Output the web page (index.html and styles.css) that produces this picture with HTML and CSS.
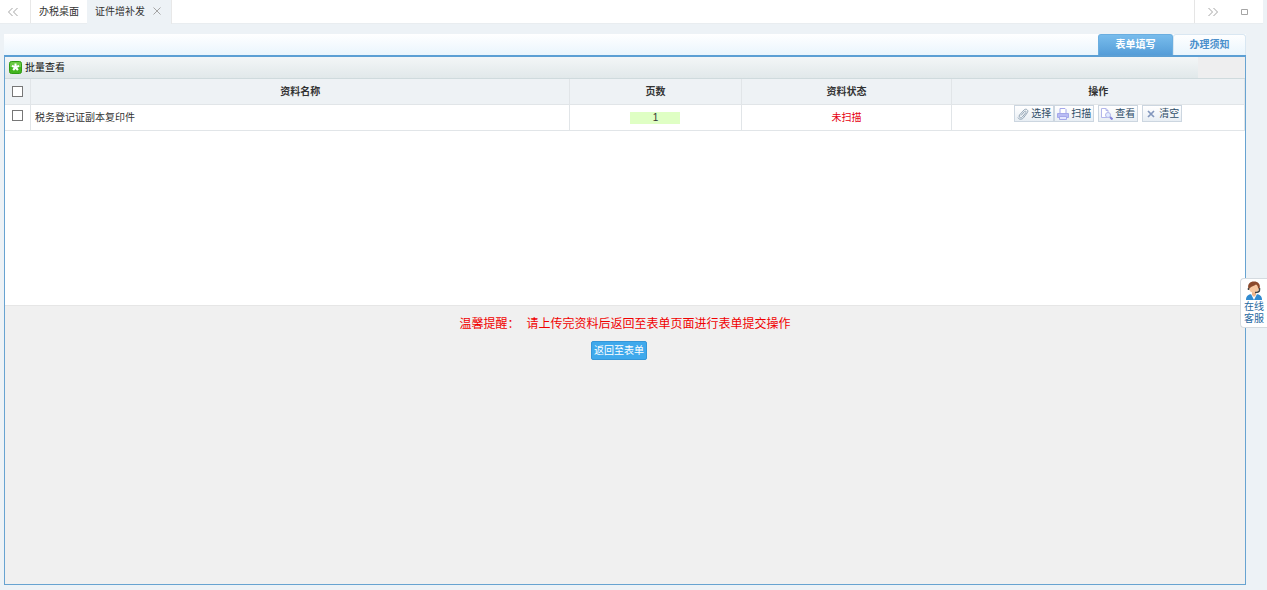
FILE: index.html
```html
<!DOCTYPE html>
<html lang="zh-CN">
<head>
<meta charset="utf-8">
<title>证件增补发</title>
<link rel="stylesheet" href="styles.css">
</head>
<body>
<div class="page">
  <header class="topbar">
    <button class="nav-btn nav-prev" type="button" aria-label="向左滚动"><svg width="12" height="10" viewBox="0 0 12 10"><path d="M5.500 1 1.500 5l4 4M10.500 1l-4 4 4 4"/></svg></button>
    <nav class="page-tabs">
      <a class="page-tab" href="#">办税桌面</a>
      <div class="page-tab current"><a href="#">证件增补发</a><button class="close" type="button" aria-label="关闭"><svg width="8" height="8" viewBox="0 0 8 8"><path d="M.5.5l7 7M7.500.5l-7 7"/></svg></button></div>
    </nav>
    <div class="window-tools">
      <button class="nav-btn" type="button" aria-label="向右滚动"><svg width="12" height="10" viewBox="0 0 12 10"><path d="M1.500 1l4 4-4 4M6.500 1l4 4-4 4"/></svg></button>
      <button class="nav-btn" type="button" aria-label="最大化"><svg width="8" height="8" viewBox="0 0 8 8"><path d="M.5 1.500h6v5h-6z"/></svg></button>
    </div>
  </header>
  <main class="content">
    <nav class="form-tabs">
      <a class="form-tab active" href="#">表单填写</a>
      <a class="form-tab" href="#">办理须知</a>
    </nav>
    <section class="panel">
      <div class="toolbar">
        <button class="batch" type="button"><svg width="13" height="13" viewBox="0 0 13 13"><rect x=".5" y=".5" width="12" height="12" rx="2" fill="#43b51f" stroke="#2f9a14"/><path d="M1 3a2 2 0 0 1 2-2h7a2 2 0 0 1 2 2v3H1z" fill="#6ccb45"/><path d="M5.500 2.500h2v2.200L9.800 4l.6 1.900-2.200.7 1.500 2-1.600 1.200L6.500 8 5 9.800 3.400 8.600l1.400-2-2.200-.7.600-1.900 2.300.7z" fill="#fff"/></svg>批量查看</button>
        <div class="toolbar-end"></div>
      </div>
      <div class="list">
        <table class="docs">
          <colgroup><col class="c-check"><col class="c-name"><col class="c-pages"><col class="c-state"><col class="c-ops"></colgroup>
          <thead>
            <tr><th class="check"><input type="checkbox" aria-label="全选"></th><th>资料名称</th><th>页数</th><th>资料状态</th><th>操作</th></tr>
          </thead>
          <tbody>
            <tr>
              <td class="check"><input type="checkbox" aria-label="选择税务登记证副本复印件"></td>
              <td class="name">税务登记证副本复印件</td>
              <td><span class="count">1</span></td>
              <td class="state">未扫描</td>
              <td class="ops"><div class="actions">
                <button class="action" type="button"><svg width="12" height="12" viewBox="0 0 12 12" fill="none" stroke="#93a5b5"><path d="M4 7.500 7.500 3.500c1-1 2.200 0 1.300 1.200L5.300 9C3.800 10.800 1 9 2.500 7L7 2c2-2 5 .3 3.400 2.600L6.500 9.800C4.600 12 1.500 11.500.9 9.500"/></svg>选择</button>
                <button class="action" type="button"><svg width="12" height="12" viewBox="0 0 12 12" fill="none" stroke="#a5a8ea"><path d="M3 5V.5h5l1 1V5" fill="#fff"/><path d="M.5 5.500h11v4H.5z" fill="#b9bcf4"/><path d="M2.500 8.500h7v3h-7z" fill="#e4e6ff"/></svg>扫描</button>
                <button class="action spaced" type="button"><svg width="12" height="12" viewBox="0 0 12 12" fill="none" stroke="#b2b6ea"><path d="M6 9.500H.5v-9H5l2 2V4M5 .5v2h2" fill="#fff"/><circle cx="7" cy="7" r="2.500" fill="#e3edff"/><path d="m9 9 2.500 2.500" stroke="#8583dc" stroke-width="2"/></svg>查看</button>
                <button class="action spaced" type="button"><svg width="12" height="12" viewBox="0 0 12 12" fill="none" stroke="#8397bd" stroke-width="1.700"><path d="m3 3 6 6M9 3 3 9"/></svg>清空</button>
              </div></td>
            </tr>
          </tbody>
        </table>
      </div>
      <div class="footer">
        <p class="notice"><span>温馨提醒：</span><span>请上传完资料后返回至表单页面进行表单提交操作</span></p>
        <button class="back" type="button">返回至表单</button>
      </div>
    </section>
  </main>
</div>
<a class="service" href="#">
  <svg width="18" height="20" viewBox="0 0 18 20"><path d="M1 19c0-5 3-6 8-6s8 1 8 6z" fill="#318bd0"/><path d="m6 13 3 6 3-6z" fill="#fff"/><path d="M7 11h4v3l-2 2-2-2z" fill="#efb58c"/><circle cx="9" cy="7" r="5" fill="#f7c7a0"/><path d="M3.500 8C2 3 5 .5 9 .5S16 3 14.500 8l-1.500-1c0-2-1-3-2-3.500C9 5.500 6 5 5 7z" fill="#8b4a2d"/><path d="M3.500 7v2M14.500 7v2c0 2-2 2.500-4.500 2.500" fill="none" stroke="#444" stroke-width="1.500"/></svg>
  <span>在线<br>客服</span>
</a>
</body>
</html>
```
FILE: styles.css
```css
* { box-sizing: border-box; }

body {
  margin: 0;
  background: #edf2f6;
  color: #333;
  font: 10px/14px "Liberation Sans", "Noto Sans CJK SC", sans-serif;
}

a { color: inherit; text-decoration: none; }

button {
  margin: 0;
  padding: 0;
  border: 0;
  background: none;
  color: inherit;
  font: inherit;
  cursor: pointer;
}

svg { display: block; flex: none; }

.page {
  display: flex;
  flex-direction: column;
  min-height: 100vh;
  padding-right: 4px;
}

.topbar {
  display: flex;
  height: 24px;
  background: #fff;
  border-bottom: 1px solid #e9edf0;
}

.nav-btn {
  display: flex;
  align-items: center;
  justify-content: center;
  width: 32px;
}

.nav-btn svg, .close svg { fill: none; stroke: #a5a5a5; }

.nav-prev {
  width: 31px;
  padding-right: 4px;
  border-right: 1px solid #e8e8e8;
}

.page-tabs { display: flex; flex: 1; }

.page-tab {
  display: flex;
  align-items: center;
  padding: 0 8px;
}

.page-tab.current {
  gap: 8px;
  height: 24px;
  padding-right: 10px;
  background: #edf2f6;
  border-right: 1px solid #e8e8e8;
}

.close { padding-bottom: 2px; }

.window-tools {
  display: flex;
  padding: 0 2px;
  border-left: 1px solid #e5e5e5;
}

.content {
  display: flex;
  flex: 1;
  flex-direction: column;
  margin: 10px 17px 5px 4px;
}

.form-tabs {
  display: flex;
  justify-content: flex-end;
  height: 21px;
  background: linear-gradient(#fff, #eaf5fd);
}

.form-tab {
  display: flex;
  align-items: center;
  justify-content: center;
  width: 73px;
  border: 1px solid #d9e7f2;
  border-bottom: 0;
  border-radius: 3px 3px 0 0;
  color: #4b90cc;
  font-weight: bold;
}

.form-tab.active {
  width: 75px;
  border-color: #6aaee0;
  background: linear-gradient(#78bcec, #559dd8);
  color: #fff;
}

.panel {
  display: flex;
  flex: 1;
  flex-direction: column;
  border: 1px solid #67a3d1;
  border-top: 2px solid #5c9fd4;
  background: #f0f0f0;
}

.toolbar {
  display: flex;
  justify-content: space-between;
  height: 22px;
  padding-left: 4px;
  border-bottom: 1px solid #cfdadd;
  background: linear-gradient(#f3f6f7, #e1e8ea);
}

.toolbar-end { width: 47px; background: #eeeeef; }

.batch {
  display: flex;
  align-items: center;
  gap: 3px;
  color: #111;
}

.list { min-height: 227px; background: #fff; border-bottom: 1px solid #e6e6e6; }

.docs {
  width: 100%;
  table-layout: fixed;
  border-collapse: separate;
  border-spacing: 0;
}

.c-check { width: 26px; }
.c-name { width: 43.5%; }
.c-pages { width: 13.8%; }
.c-state { width: 17%; }

th, td {
  height: 26px;
  padding: 0 4px;
  border: 1px solid #e1e5e8;
  border-width: 0 1px 1px 0;
  text-align: center;
}

th { background: #eef2f5; }

.check { padding: 0; }

.check input {
  appearance: none;
  display: block;
  width: 11px;
  height: 11px;
  margin: 0 auto;
  border: 1px solid #777;
  background: #fff;
}

td.check { padding-bottom: 4px; }

td.name { text-align: left; }

.count {
  display: block;
  width: 50px;
  height: 12px;
  margin: 0 auto;
  background: #dfffc4;
  line-height: 12px;
}

.state { color: #e60012; }

.ops { vertical-align: top; }

.actions { display: flex; justify-content: center; }

.action {
  display: flex;
  align-items: center;
  gap: 2px;
  height: 17px;
  padding: 0 2px;
  border: 1px solid #ccd6e0;
  background: linear-gradient(#fff, #e8eef4);
  color: #304f68;
}

.action.spaced { margin-left: 4px; }

.footer { padding: 10px 8px; text-align: center; }

.notice {
  display: flex;
  justify-content: center;
  gap: 7px;
  margin: 0 0 9px;
  color: #f00000;
  font-size: 12px;
  line-height: 16px;
}

.back {
  height: 19px;
  margin-right: 12px;
  padding: 0 2px;
  border: 1px solid #3596d8;
  border-radius: 2px;
  background: #3fa9ec;
  color: #fff;
}

.service {
  position: fixed;
  top: 278px;
  right: 0;
  display: flex;
  flex-direction: column;
  align-items: center;
  width: 27px;
  padding: 2px 0;
  border: 1px solid #d5dbe0;
  border-right: 0;
  border-radius: 4px 0 0 4px;
  background: #fff;
  color: #24679f;
  line-height: 12px;
}
```
